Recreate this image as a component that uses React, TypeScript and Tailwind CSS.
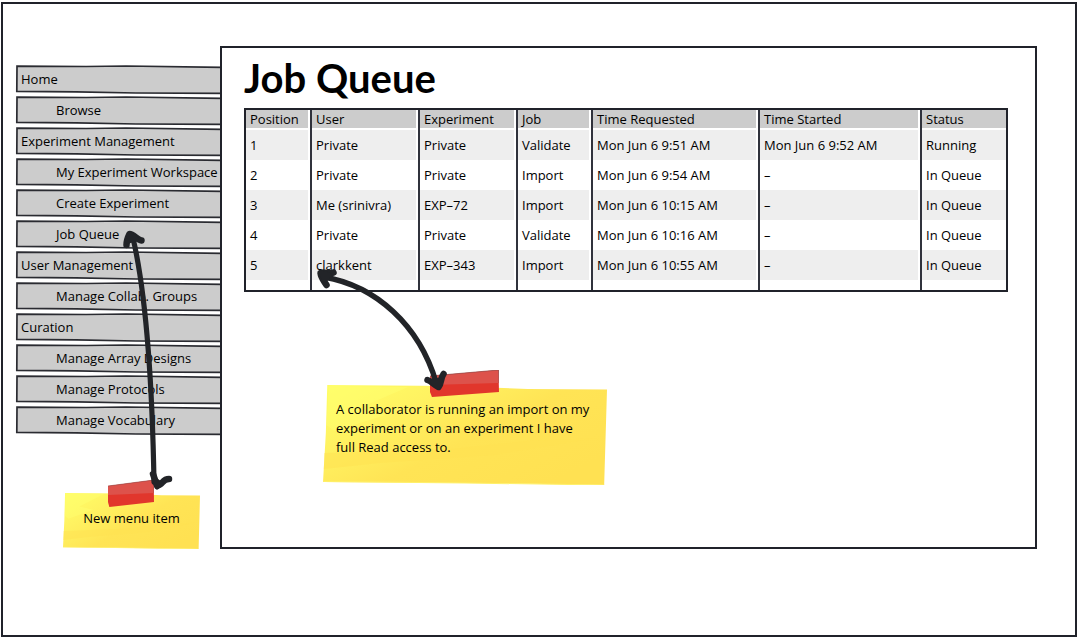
import type { ReactNode } from 'react';

type MenuItem = { label: string; nested?: boolean };

const menu: MenuItem[] = [
  { label: 'Home' },
  { label: 'Browse', nested: true },
  { label: 'Experiment Management' },
  { label: 'My Experiment Workspace', nested: true },
  { label: 'Create Experiment', nested: true },
  { label: 'Job Queue', nested: true },
  { label: 'User Management' },
  { label: 'Manage Collab. Groups', nested: true },
  { label: 'Curation' },
  { label: 'Manage Array Designs', nested: true },
  { label: 'Manage Protocols', nested: true },
  { label: 'Manage Vocabulary', nested: true },
];

const columns = [
  { label: 'Position', width: 'w-[64px]' },
  { label: 'User', width: 'w-[108px]' },
  { label: 'Experiment', width: 'w-[98px]' },
  { label: 'Job', width: 'w-[75px]' },
  { label: 'Time Requested', width: 'w-[167px]' },
  { label: 'Time Started', width: 'w-[162px]' },
  { label: 'Status', width: 'w-auto' },
];

const jobs = [
  ['1', 'Private', 'Private', 'Validate', 'Mon Jun 6 9:51 AM', 'Mon Jun 6 9:52 AM', 'Running'],
  ['2', 'Private', 'Private', 'Import', 'Mon Jun 6 9:54 AM', '–', 'In Queue'],
  ['3', 'Me (srinivra)', 'EXP–72', 'Import', 'Mon Jun 6 10:15 AM', '–', 'In Queue'],
  ['4', 'Private', 'Private', 'Validate', 'Mon Jun 6 10:16 AM', '–', 'In Queue'],
  ['5', 'clarkkent', 'EXP–343', 'Import', 'Mon Jun 6 10:55 AM', '–', 'In Queue'],
];

/* Hand-drawn outline behind a menu entry; its right end runs under the main panel. */
function SketchBar() {
  return (
    <svg
      aria-hidden="true"
      viewBox="0 0 204 28"
      preserveAspectRatio="none"
      className="absolute inset-0 h-full w-full overflow-visible"
    >
      <path
        d="M1 0.200 L70 0.500 L110 0 L206 1.300 L206 27.300 L120 27 L60 25.800 L0.800 25.400 Z"
        fill="#cccccc"
        stroke="#2a2b31"
        strokeWidth="1.7"
      />
    </svg>
  );
}

function Note({ children, id, tape }: { children: ReactNode; id: string; tape: ReactNode }) {
  return (
    <div className="relative">
      <svg
        aria-hidden="true"
        viewBox="0 0 100 100"
        preserveAspectRatio="none"
        className="absolute inset-0 h-full w-full"
      >
        <defs>
          <linearGradient id={id} x1="0" y1="0" x2="1" y2="0.7">
            <stop offset="0" stopColor="#ffff66" />
            <stop offset="0.3" stopColor="#fff261" />
            <stop offset="0.6" stopColor="#ffe455" />
            <stop offset="1" stopColor="#ffe152" />
          </linearGradient>
        </defs>
        <path d="M1.5 0 L45 1 L72 4 L100 4.5 L99 100 L78 99 L50 98 L0 97 L1 48 Z" fill={`url(#${id})`} />
        <path d="M0.5 68 L45 64 L72 56 L96 53 L60 70 L20 78 L0.3 84 Z" fill="#ffe152" opacity="0.55" />
        <path d="M2 1 L30 2 L12 24 L22 30 L4 46 L1.2 40 Z" fill="#ffff70" opacity="0.45" />
        <path d="M0 96.500 L50 98 L99 100" fill="none" stroke="#fff06a" strokeWidth="1" />
      </svg>
      {tape}
      <p className="relative leading-[19px] whitespace-nowrap">{children}</p>
    </div>
  );
}

function Tape({ className }: { className: string }) {
  return (
    <svg aria-hidden="true" viewBox="0 0 70 27" preserveAspectRatio="none" className={className}>
      <path d="M0 6 L69.5 0 L70 22 L2 27 L0 22 Z" fill="#e1362c" />
      <path d="M0 6 L69.5 0 L69.5 13 L0 15 Z" fill="#dd524b" />
      <path d="M0 6 L69.5 0 L70 13" fill="none" stroke="#8f4a48" strokeWidth="0.7" />
    </svg>
  );
}

export default function App() {
  return (
    <div className="flex min-h-screen bg-white px-px py-[2px] font-['Open_Sans',sans-serif] text-[13px] font-medium text-black">
      <div className="flex flex-1 border-2 border-[#20222a] pt-[42px] pr-[38px] pb-[86px] pl-[13px]">
        <aside className="relative w-[204px] shrink-0 pt-5">
          <nav aria-label="Main">
            <ul className="flex flex-col gap-[3px]">
              {menu.map((item) => (
                <li key={item.label} className="relative h-7">
                  <SketchBar />
                  <a
                    href="#"
                    className={`relative flex h-full items-center whitespace-nowrap ${item.nested ? 'pl-10' : 'pl-[5px]'}`}
                  >
                    {item.label}
                  </a>
                </li>
              ))}
            </ul>
          </nav>
          <div className="mt-[58px] mr-5 ml-[47px] text-center">
            <Note id="note-menu" tape={<Tape className="absolute -top-[13px] left-[45px] h-[27px] w-[46px]" />}>
              <span className="block pt-4 pb-[21px]">New menu item</span>
            </Note>
          </div>
          <svg
            aria-hidden="true"
            viewBox="110 220 70 280"
            className="pointer-events-none absolute top-[174px] left-[94px] h-[280px] w-[70px]"
          >
            <g fill="#222428" stroke="#222428" strokeLinecap="round" strokeLinejoin="round">
              <path d="M133 238 C145 290 152 370 154 482" strokeWidth="5.2" fill="none" />
              <path d="M126.500 245 C126.500 241 128 237 129.500 234 C134 234 137 240 141.500 240.500" strokeWidth="6.500" fill="none" />
              <path d="M129.500 234 L136 239 L128 241 Z" strokeWidth="5" />
              <path d="M153 474 L157 485.500 C163 485 162 479 169 479" strokeWidth="6.500" fill="none" />
              <path d="M155 480 L161 484 L157 487 Z" strokeWidth="5" />
            </g>
          </svg>
        </aside>

        <main className="relative min-w-0 flex-1 border-2 border-[#20222a] bg-white pt-2 pr-[27px] pl-[22px]">
          <h1 className="font-['Lato',sans-serif] text-[40px] leading-[44px] font-bold">Job Queue</h1>
          <div className="mt-2 border-2 border-[#20222a]">
            <table className="w-full table-fixed border-separate border-spacing-0 text-left">
              <thead>
                <tr>
                  {columns.map((column, index) => (
                    <th
                      key={column.label}
                      scope="col"
                      className={`bg-[#cccccc] bg-clip-content p-0 pb-[2px] font-medium ${column.width} ${index > 0 ? 'border-l-2 border-[#30323c]' : ''} ${index < 6 ? 'pr-[2px]' : ''}`}
                    >
                      <span className="block pl-1 leading-[18px] whitespace-nowrap">{column.label}</span>
                    </th>
                  ))}
                </tr>
              </thead>
              <tbody>
                {jobs.map((job, row) => (
                  <tr key={job[0]}>
                    {job.map((value, index) => (
                      <td
                        key={index}
                        className={`bg-clip-content p-0 ${row % 2 === 0 ? 'bg-[#eeeeee]' : ''} ${row === 4 ? 'pb-[10px]' : ''} ${index > 0 ? 'border-l-2 border-[#30323c]' : ''} ${index < 6 ? 'pr-[2px]' : ''}`}
                      >
                        <span className="block pl-1 leading-[30px] whitespace-nowrap">{value}</span>
                      </td>
                    ))}
                  </tr>
                ))}
              </tbody>
            </table>
          </div>
          <div className="mt-[93px] ml-[79px] w-[284px]">
            <Note id="note-import" tape={<Tape className="absolute -top-[15px] left-[107px] h-[27px] w-[69px]" />}>
              <span className="block pt-[15px] pb-7 pl-[13px]">
                A collaborator is running an import on my
                <br />
                experiment or on an experiment I have
                <br />
                full Read access to.
              </span>
            </Note>
          </div>
          <svg
            aria-hidden="true"
            viewBox="310 260 145 140"
            className="pointer-events-none absolute top-[212px] left-[88px] h-[140px] w-[145px]"
          >
            <g fill="#222428" stroke="#222428" strokeLinecap="round" strokeLinejoin="round">
              <path d="M324 277 C376 286 419 325 436 382" strokeWidth="5.4" fill="none" />
              <path d="M333.500 272.500 C328 275 325 271 320.500 273 C321 278 324 281 326.500 285" strokeWidth="6.500" fill="none" />
              <path d="M321 273 L329 275 L325 280 Z" strokeWidth="5" />
              <path d="M427.500 380 C431 381 434 385 438.500 387 C442 383 440 379 443.500 374" strokeWidth="6.500" fill="none" />
              <path d="M433 382 L440 380 L438 387 Z" strokeWidth="5" />
            </g>
          </svg>
        </main>
      </div>
    </div>
  );
}
